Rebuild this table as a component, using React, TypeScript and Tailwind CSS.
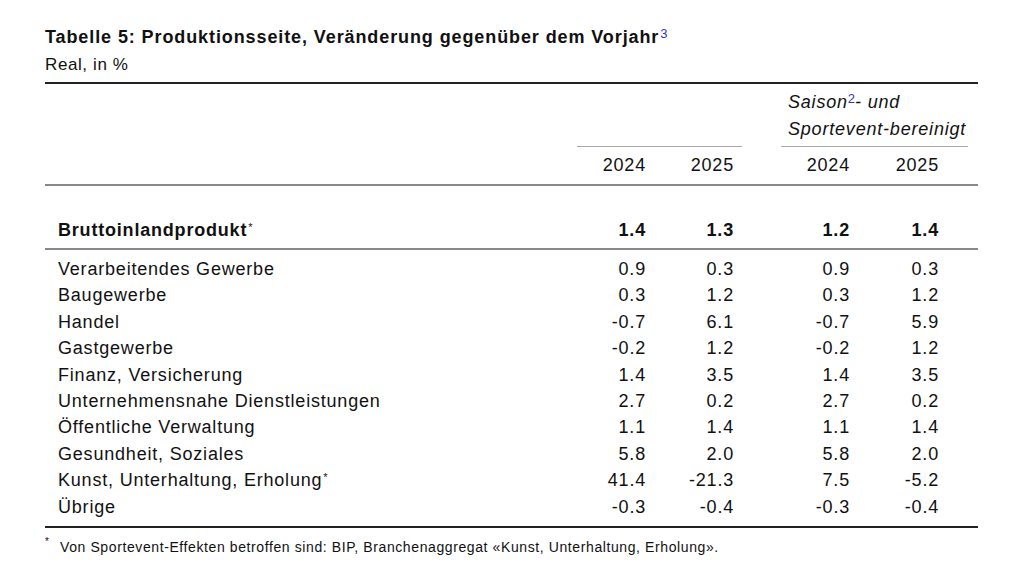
const rows: [string, string, string, string, string, boolean?][] = [
  ["Verarbeitendes Gewerbe", "0.9", "0.3", "0.9", "0.3"],
  ["Baugewerbe", "0.3", "1.2", "0.3", "1.2"],
  ["Handel", "-0.7", "6.1", "-0.7", "5.9"],
  ["Gastgewerbe", "-0.2", "1.2", "-0.2", "1.2"],
  ["Finanz, Versicherung", "1.4", "3.5", "1.4", "3.5"],
  ["Unternehmensnahe Dienstleistungen", "2.7", "0.2", "2.7", "0.2"],
  ["Öffentliche Verwaltung", "1.1", "1.4", "1.1", "1.4"],
  ["Gesundheit, Soziales", "5.8", "2.0", "5.8", "2.0"],
  ["Kunst, Unterhaltung, Erholung", "41.4", "-21.3", "7.5", "-5.2", true],
  ["Übrige", "-0.3", "-0.4", "-0.3", "-0.4"],
];

const grid = "grid grid-cols-[532px_69px_96px_39px_69px_123px_5px]";

function Star() {
  return <sup className="relative -top-[5px] ml-[1px] text-[11px] font-normal">*</sup>;
}

function Row({ label, v, star }: { label: string; v: string[]; star?: boolean }) {
  return (
    <div className={`${grid} h-[26.4px] items-center`}>
      <div className="pl-[13px]">
        {label}
        {star && <Star />}
      </div>
      <div className="text-right">{v[0]}</div>
      <div className="pr-[8px] text-right">{v[1]}</div>
      <div />
      <div className="text-right">{v[2]}</div>
      <div className="pr-[34px] text-right">{v[3]}</div>
      <div />
    </div>
  );
}

export default function App() {
  return (
    <div className="h-[585px] w-[1024px] bg-white pl-[45px] pt-[26px] font-['Liberation_Sans',Arial,sans-serif] text-[#111]">
      <h1 className="text-[18px] font-bold leading-[22px] tracking-[0.9px]">
        Tabelle 5: Produktionsseite, Veränderung gegenüber dem Vorjahr
        <sup className="relative -top-[5px] ml-[1px] text-[13px] font-normal tracking-normal text-[#3333cc]">3</sup>
      </h1>
      <div className="mt-[6px] text-[17px] leading-[22px] tracking-[0.6px]">Real, in %</div>

      <div className="mt-[6px] w-[933px] text-[18px] tracking-[0.8px]">
        <div className="h-[2px] bg-[#222]" />

        {/* header */}
        <div className={`${grid} h-[100px]`}>
          <div />
          <div className="col-span-2 flex flex-col justify-end">
            <div className="h-[1px] bg-[#aaa]" />
            <div className="flex h-[37px] items-center">
              <div className="w-[69px] text-right">2024</div>
              <div className="w-[88px] text-right">2025</div>
            </div>
          </div>
          <div />
          <div className="col-span-2 flex flex-col justify-end">
            <div className="pb-[3px] pl-[7px] italic leading-[27px]">
              Saison
              <sup className="relative -top-[5px] text-[13px] not-italic tracking-normal text-[#3333cc]">2</sup>
              - und
              <br />
              Sportevent-bereinigt
            </div>
            <div className="mr-[5px] h-[1px] bg-[#aaa]" />
            <div className="flex h-[37px] items-center">
              <div className="w-[69px] text-right">2024</div>
              <div className="w-[89px] text-right">2025</div>
            </div>
          </div>
          <div />
        </div>

        <div className="h-[2px] bg-[#888]" />

        <div className={`${grid} h-[62px] items-end pb-[4px] font-bold`}>
          <div className="pl-[13px]">
            Bruttoinlandprodukt
            <Star />
          </div>
          <div className="text-right">1.4</div>
          <div className="pr-[8px] text-right">1.3</div>
          <div />
          <div className="text-right">1.2</div>
          <div className="pr-[34px] text-right">1.4</div>
          <div />
        </div>

        <div className="h-[2px] bg-[#888]" />

        <div className="py-[6px]">
          {rows.map(([label, a, b, c, d, star]) => (
            <Row key={label} label={label} v={[a, b, c, d]} star={star} />
          ))}
        </div>

        <div className="h-[2px] bg-[#222]" />
      </div>

      <div className="mt-[10px] flex text-[14px] leading-[18px] tracking-[0.6px]">
        <span className="relative -top-[5px] w-[15px] text-[10px]">*</span>
        <span>Von Sportevent-Effekten betroffen sind: BIP, Branchenaggregat «Kunst, Unterhaltung, Erholung».</span>
      </div>
    </div>
  );
}
